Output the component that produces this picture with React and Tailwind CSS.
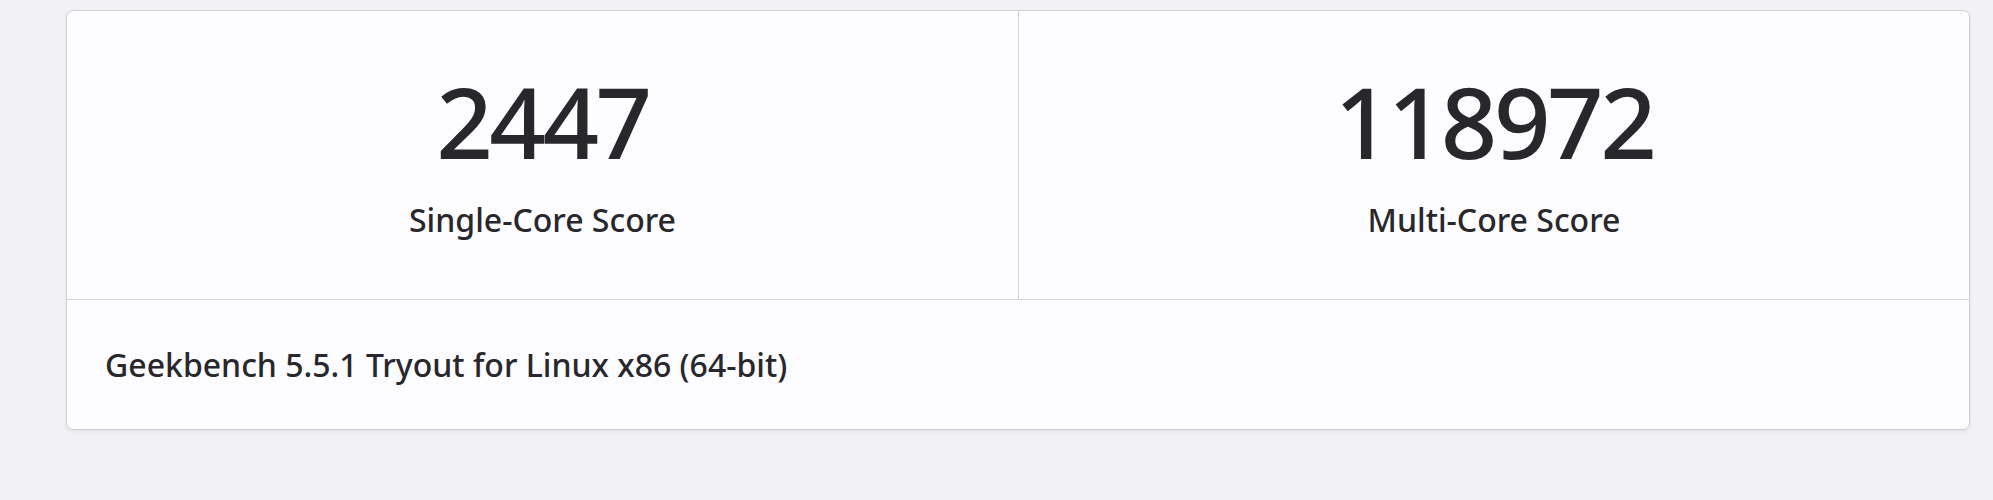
export default function App() {
  const scores = [
    { value: '2447', label: 'Single-Core Score' },
    { value: '118972', label: 'Multi-Core Score' },
  ];

  return (
    <div
      className="min-h-[500px] bg-[#f2f1f3] pl-[66px] pr-[23px] pt-[10px] text-[#28272c]"
      style={{ fontFamily: '"Noto Sans", "Open Sans", sans-serif' }}
    >
      <div className="overflow-hidden rounded-[7px] border border-[#cfced2] bg-[#fdfcfe] shadow-[0_2px_4px_rgba(0,0,0,0.06)]">
        <div className="grid h-[289px] grid-cols-2 border-b border-[#d3d2d6]">
          {scores.map((s, i) => (
            <div
              key={s.value}
              className={`flex flex-col items-center pt-[60px] ${i === 1 ? 'border-l border-[#d3d2d6]' : ''}`}
            >
              <div className="text-[99px] font-medium leading-none tracking-[-3.5px]">{s.value}</div>
              <div className="mt-[34px] text-[32px] font-medium leading-none">{s.label}</div>
            </div>
          ))}
        </div>
        <div className="flex h-[129px] items-center pl-[38px]">
          <span className="text-[32px] font-medium leading-none">Geekbench 5.5.1 Tryout for Linux x86 (64-bit)</span>
        </div>
      </div>
    </div>
  );
}
